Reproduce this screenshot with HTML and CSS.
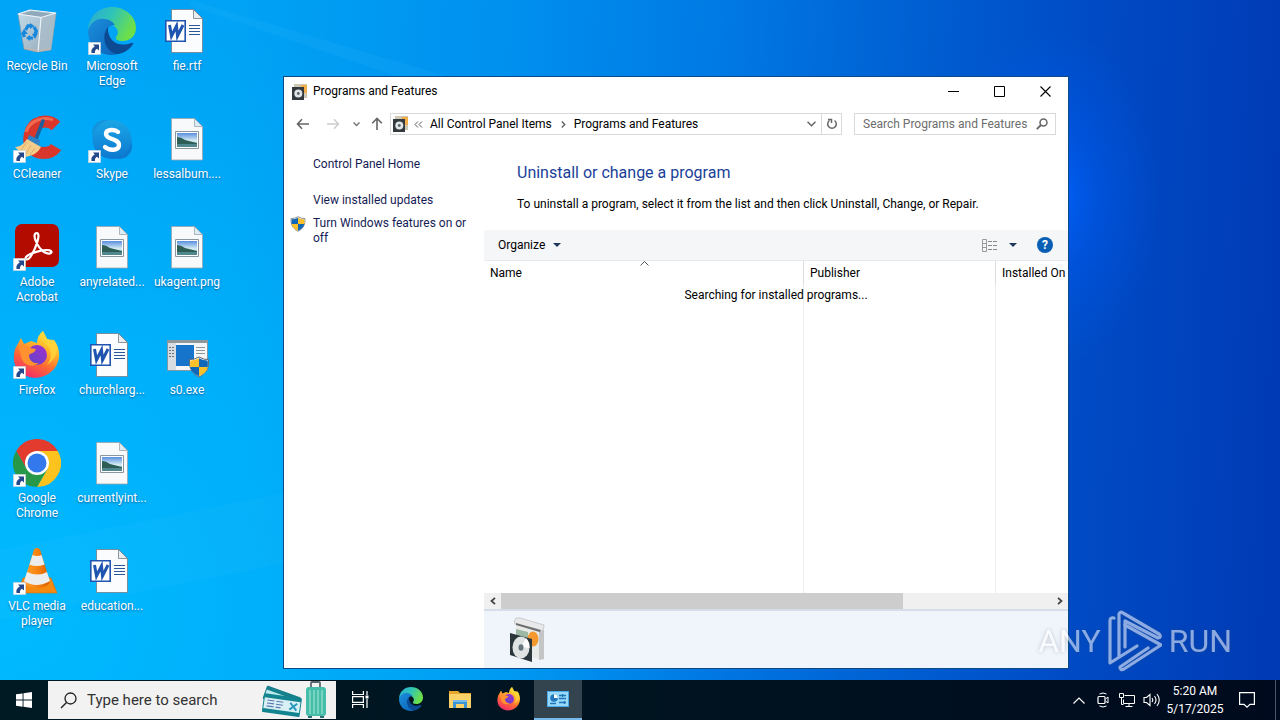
FILE: index.html
```html
<!DOCTYPE html>
<html lang="en">
<head>
<meta charset="utf-8">
<title>Desktop</title>
<link rel="stylesheet" href="styles.css">
</head>
<body>
<svg class="defs" aria-hidden="true">
  <defs>
    <linearGradient id="edgeGreen" x1="0" y1="0" x2="1" y2="0.4"><stop offset="0" stop-color="#2aa8d8"/><stop offset=".5" stop-color="#2fc4b8"/><stop offset="1" stop-color="#6cdf4a"/></linearGradient>
    <linearGradient id="edgeBlue" x1="0" y1="0" x2="1" y2="1"><stop offset="0" stop-color="#1b8fdc"/><stop offset="1" stop-color="#0b62b8"/></linearGradient>
    <linearGradient id="foxBody" x1=".8" y1="0" x2=".3" y2="1"><stop offset="0" stop-color="#fff03f"/><stop offset=".35" stop-color="#ffb52a"/><stop offset=".65" stop-color="#ff6a33"/><stop offset="1" stop-color="#f02a6c"/></linearGradient>
    <linearGradient id="foxGlobe" x1="0" y1="1" x2="1" y2="0"><stop offset="0" stop-color="#5a45c8"/><stop offset="1" stop-color="#a42fd0"/></linearGradient>
    <linearGradient id="skyGrad" x1="0" y1="0" x2="0" y2="1"><stop offset="0" stop-color="#1aa6e6"/><stop offset="1" stop-color="#0c78d0"/></linearGradient>
    <linearGradient id="photo" x1="0" y1="0" x2="0" y2="1"><stop offset="0" stop-color="#5a8fe0"/><stop offset=".55" stop-color="#d5ecf2"/><stop offset="1" stop-color="#8cc0d8"/></linearGradient>
    <linearGradient id="cone" x1="0" y1="0" x2="1" y2="0"><stop offset="0" stop-color="#ffa030"/><stop offset=".5" stop-color="#f88410"/><stop offset="1" stop-color="#d85f00"/></linearGradient>
    <linearGradient id="binGrad" x1="0" y1="0" x2="1" y2="1"><stop offset="0" stop-color="#c3dbea"/><stop offset="1" stop-color="#93a7b5"/></linearGradient>
    <symbol id="shortcut" viewBox="0 0 13 13"><path fill="#fff" stroke="#b9c6d3" stroke-width=".6" d="M.3.3h12.400v12.400H.3z"/><path fill="#25488c" d="M5 2.500h6v6L9 6.700Q6.500 8 7 11H3.500Q2.500 6.500 6.800 4.400z"/></symbol>
    <symbol id="shield" viewBox="0 0 22 22"><path fill="#fff" stroke="#5b6670" stroke-width="1" d="M11 1Q6 4 1.500 3.500C1 11 3 17 11 21c8-4 10-10 9.500-17.500Q16 4 11 1z"/><path fill="#fcc12a" d="M11 2.300Q15 4.500 19.700 4.500q.4 3.500 0 6.500H11zM2.300 11H11v9.200C5.300 18 3.100 14.700 2.300 11z"/><path fill="#1268b8" d="M11 2.300V11H2.300q-.4-3 0-6.500Q7 4.500 11 2.300zM11 11h8.700c-.8 3.700-3 7-8.700 9.200z"/></symbol>
    <symbol id="shieldAlt" viewBox="0 0 22 22"><path fill="#fff" stroke="#5b6670" stroke-width="1" d="M11 1Q6 4 1.500 3.500C1 11 3 17 11 21c8-4 10-10 9.500-17.500Q16 4 11 1z"/><path fill="#1268b8" d="M11 2.300Q15 4.500 19.700 4.500q.4 3.500 0 6.500H11zM2.300 11H11v9.200C5.300 18 3.100 14.700 2.300 11z"/><path fill="#fcc12a" d="M11 2.300V11H2.300q-.4-3 0-6.500Q7 4.500 11 2.300zM11 11h8.700c-.8 3.700-3 7-8.700 9.200z"/></symbol>
    <symbol id="recycle" viewBox="0 0 48 48"><path fill="url(#binGrad)" stroke="#8298a6" stroke-width=".7" d="M5 7 17 3l26 3-5 37-14 2-13-3z"/><path fill="#8fa9ba" d="m7 7 11-3 23 3-12 3z"/><path fill="#a9bcc8" opacity=".8" d="M28 10.500 43 6l-5 37-14 2z"/><path fill="none" stroke="#edf4f8" stroke-width="1.200" d="M5 7 28 10.500 43 6 17 3zM28 10.500 25 45"/><path fill="#c9b8a8" opacity=".6" d="m11 40 14 3 13-2-1 2-13 2-13-3z"/><path fill="none" stroke="#1687dd" stroke-width="3.200" d="m12.500 23 2.500-4.200h3M21 20l2.300 4-1.300 3M20 31h-4.500M11.500 30l-1.500-4"/><path fill="#1687dd" d="m17 16 4.500 3-4.500 3zM19 27l6-1-3 6zM8 27l3-5 4 5zM17 28v6l-4-3z"/></symbol>
    <symbol id="edge" viewBox="0 0 48 48"><path fill="url(#edgeGreen)" d="M0 23C1 9 11 0 24 0c14 0 24 10 24 21 0 8-6 13-13 13-6 0-8-2-7-4 3-3 2-7 0-9-6-7-20-8-28 2z"/><path fill="url(#edgeBlue)" d="M0 24c2-8 9-13 16-12 5 0 9 3 11 6-5-1-10 5-10 12 0 8 7 16 15 16-3 1-5 2-8 2C10 48 0 38 0 24z"/><path fill="#0c4a94" d="M20 20c-7 8-4 24 9 27 7 0 14-6 16-10 1-2-1-1-2-1-12 5-24-2-23-16z"/></symbol>
    <symbol id="worddoc" viewBox="0 0 48 48"><path fill="#fbfcfd" stroke="#717e88" stroke-width=".8" d="M8.500 2.500h22l9 9v34h-31z"/><path fill="#e9edf0" stroke="#717e88" stroke-width=".8" d="M30.500 2.500v9h9z"/><path stroke="#2b579a" stroke-width="1" d="M26 18.500h11M26 21.500h11M26 24.500h11M26 27.500h11"/><path fill="#fff" stroke="#1f55b0" stroke-width="1.600" d="M2.800 13.800h19.400v20.400H2.800z"/><path fill="none" stroke="#1f55b0" stroke-width="3" d="m6.500 18 2 11 5-10 1 10 5.500-11"/></symbol>
    <symbol id="imgdoc" viewBox="0 0 48 48"><path fill="#f8f9fa" stroke="#9aa5ad" stroke-width=".8" d="M8.500 3.500h23l8 8v33.500h-31z"/><path fill="#dcecf4" stroke="#9aa5ad" stroke-width=".8" d="M31.500 3.500v8h8z"/><path fill="#fff" stroke="#7d8a94" stroke-width=".9" d="M12.500 16.500h23v17h-23z"/><path fill="url(#photo)" d="M14 18h20v14H14z"/><path fill="#2e5d56" d="M14 22q4 0 8 3l12 3v1l-20 1z"/><path fill="#51878f" d="M14 29h20v3H14z"/></symbol>
    <symbol id="ccleaner" viewBox="0 0 48 48"><path fill="none" stroke="#d9372c" stroke-width="12" d="M43 11C35 3 20 6 17 19c-3 11 4 19 13 19 6 0 10-1 13-6"/><path fill="none" stroke="#f06a50" stroke-width="3" d="M40 5C31 1 17 5 13 17"/><path stroke="#1f5f9c" stroke-width="3.500" stroke-linecap="round" d="m30 6-7 18"/><path fill="#2e82c8" d="m16 20 11 5-1 7-12-6z"/><path fill="#f5cd8a" d="m14 24 14 8c-3 6-9 9-16 10L2 32c6 0 9-4 12-8z"/><path stroke="#dcae6a" fill="none" d="m14 27-6 8m10-5-5 9m9-6-5 7"/></symbol>
    <symbol id="skype" viewBox="0 0 48 48"><circle cx="17" cy="18" r="13" fill="#1493dc"/><circle cx="31" cy="31" r="13" fill="#0d7ad0"/><circle cx="24" cy="24.500" r="19.500" fill="url(#skyGrad)"/><path fill="none" stroke="#fff" stroke-width="4.400" stroke-linecap="round" d="M30 17c-3-3-12-3-12 2 0 6 13 4 13 11 0 6-10 6-14 2"/></symbol>
    <symbol id="acrobat" viewBox="0 0 48 48"><rect x="2" y="1" width="44" height="43" rx="7" fill="#b30b00"/><path fill="none" stroke="#fff" stroke-width="2.200" stroke-linejoin="round" d="M24 10c-6 0 0 14 7 19 5 3 9 1 7-1-4-3-22 2-25 6-2 3 2 4 5-1 5-8 10-22 6-23z"/></symbol>
    <symbol id="firefox" viewBox="0 0 48 48"><path fill="url(#foxBody)" d="M2 18 8 7l3 6 7-3 6 2c0-5 2-9 6-12l4 8 5 2 2-1c8 10 6 24-2 31-9 9-25 9-33 0C0 34 0 26 2 18z"/><circle cx="24" cy="24" r="10" fill="url(#foxGlobe)"/><path fill="#ff9130" d="M5 14c5-1 9 0 12 3l6 1c-1 4-5 4-7 6 0 6 5 9 10 8-8 6-17 1-18-7z"/><path fill="#ffd43b" opacity=".8" d="M30 0c-3 5 0 10 4 14 5 5 5 14 0 20 10-6 13-17 7-25l-7-1z"/></symbol>
    <symbol id="exe" viewBox="0 0 48 48"><path fill="#f6f6f6" stroke="#82898e" stroke-width=".8" d="M4.500 9.500h40v30h-40z"/><path fill="#8f979c" d="M4 9h41v3H4z"/><path fill="#d8dde1" d="M5 12h8v27H5z"/><path fill="#1674cb" d="M13 14h18v21H13z"/><path stroke="#68747e" stroke-dasharray="2 1" d="M6 16.500h6M6 19.500h6M6 22.500h6M6 25.500h6"/><path stroke="#8b959d" d="M33 16.500h9M33 19.500h9M33 22.500h9"/><use href="#shieldAlt" x="25" y="25" width="22" height="22"/></symbol>
    <symbol id="chrome" viewBox="0 0 48 48"><path fill="#e33b2e" d="M3.200 12A24 24 0 0 1 44.800 12H24L13.600 30z"/><path fill="#fcc31e" d="M44.800 12A24 24 0 0 1 24 48l10.400-18L24 12z"/><path fill="#279847" d="M3.200 12A24 24 0 0 0 24 48l10.400-18H13.600z"/><circle cx="24" cy="24" r="12" fill="#fff"/><circle cx="24" cy="24" r="9.500" fill="#3478ee"/></symbol>
    <symbol id="vlc" viewBox="0 0 48 48"><path fill="#f58a12" stroke="#d86b00" stroke-width=".6" d="M10 31h28l6 15H5z"/><path fill="url(#cone)" d="M24 1q3 0 3.500 3L37 35q-3 6-13 6t-13-6l9.500-31Q21 1 24 1z"/><path fill="#ededed" d="m19.500 8-3 9.500q7 3 15 0L28.500 8q-4 2-9 0zM14 25l-3 9q12 8 26 0l-3-9q-9 5-20 0z"/></symbol>
    <symbol id="pnf" viewBox="0 0 16 16"><path fill="#cfc8b4" d="M2 0h13v14H2z"/><path fill="#f2ae48" d="M9 1h6v8H9z"/><path fill="#33393c" d="M0 3h12v13H0z"/><circle cx="6.300" cy="9.500" r="4" fill="#dfe5e6"/><circle cx="6.300" cy="9.500" r="1.400" fill="#566"/></symbol>
    <symbol id="folder" viewBox="0 0 22 22"><path fill="#e5a72c" d="M0 3h9l2 2h11v4H0z"/><path fill="#fbd267" d="M0 6h22v14H0z"/><path fill="#3d94d4" d="M4 12h14v8h-3v-4H7v4H4z"/><path fill="#75bce9" d="M4 12h14v2H4z"/></symbol>
    <symbol id="cpl" viewBox="0 0 22 16"><path fill="#48a9e8" d="M0 0h22v16H0z"/><path fill="#97d9fa" d="M1 1h20v14H1z"/><circle cx="7" cy="7" r="3.800" fill="#2278ba"/><path fill="#fff" d="M7 3.200A3.800 3.800 0 0 1 10.800 7H7z"/><path stroke="#1f75b8" stroke-width="1.300" d="M12 4.500h7M12 7.500h7M12 11.500h7M3 12.500h6M15.500 3v3M17.500 10v3"/></symbol>
  </defs>
</svg>

<main class="desktop">
  <svg class="rays" viewBox="0 0 1280 680" preserveAspectRatio="none" aria-hidden="true"><path fill="#34b6ff" opacity=".14" d="M190 0 620 128 1060 300 190 6z"/><path fill="#36c0ff" opacity=".1" d="M0 550 300 490 300 560 0 620z"/></svg>
  <nav class="icons" aria-label="Desktop icons">
    <a href="#"><svg class="big"><use href="#recycle"/></svg><span>Recycle Bin</span></a>
    <a href="#"><svg class="big"><use href="#ccleaner"/><use href="#shortcut" y="35" width="13" height="13"/></svg><span>CCleaner</span></a>
    <a href="#"><svg class="big"><use href="#acrobat"/><use href="#shortcut" y="35" width="13" height="13"/></svg><span>Adobe Acrobat</span></a>
    <a href="#"><svg class="big"><use href="#firefox"/><use href="#shortcut" y="35" width="13" height="13"/></svg><span>Firefox</span></a>
    <a href="#"><svg class="big"><use href="#chrome"/><use href="#shortcut" y="35" width="13" height="13"/></svg><span>Google Chrome</span></a>
    <a href="#"><svg class="big"><use href="#vlc"/><use href="#shortcut" y="35" width="13" height="13"/></svg><span>VLC media player</span></a>
    <a href="#"><svg class="big"><use href="#edge"/><use href="#shortcut" y="35" width="13" height="13"/></svg><span>Microsoft Edge</span></a>
    <a href="#"><svg class="big"><use href="#skype"/><use href="#shortcut" y="35" width="13" height="13"/></svg><span>Skype</span></a>
    <a href="#"><svg class="big"><use href="#imgdoc"/></svg><span>anyrelated...</span></a>
    <a href="#"><svg class="big"><use href="#worddoc"/></svg><span>churchlarg...</span></a>
    <a href="#"><svg class="big"><use href="#imgdoc"/></svg><span>currentlyint...</span></a>
    <a href="#"><svg class="big"><use href="#worddoc"/></svg><span>education...</span></a>
    <a href="#"><svg class="big"><use href="#worddoc"/></svg><span>fie.rtf</span></a>
    <a href="#"><svg class="big"><use href="#imgdoc"/></svg><span>lessalbum....</span></a>
    <a href="#"><svg class="big"><use href="#imgdoc"/></svg><span>ukagent.png</span></a>
    <a href="#"><svg class="big"><use href="#exe"/></svg><span>s0.exe</span></a>
  </nav>

  <section class="window" aria-label="Programs and Features">
    <header class="titlebar">
      <svg class="small"><use href="#pnf"/></svg>
      <span class="caption">Programs and Features</span>
      <button class="winbtn" aria-label="Minimize"><svg width="11" height="11"><path stroke="#000" d="M0 5.500h11"/></svg></button>
      <button class="winbtn" aria-label="Maximize"><svg width="11" height="11"><path fill="none" stroke="#000" d="M.5.500h10v10H.5z"/></svg></button>
      <button class="winbtn" aria-label="Close"><svg width="11" height="11"><path stroke="#000" stroke-width="1.100" d="m.5.500 10 10m0-10-10 10"/></svg></button>
    </header>

    <div class="navbar">
      <div class="history">
        <button aria-label="Back"><svg width="14" height="12"><path fill="none" stroke="#666" stroke-width="1.600" d="M13 6H1.500M6 1.200 1.500 6 6 10.800"/></svg></button>
        <button aria-label="Forward"><svg width="14" height="12"><path fill="none" stroke="#ccc" stroke-width="1.400" d="M1 6h11.500M8 1.200 12.500 6 8 10.800"/></svg></button>
        <button class="tiny" aria-label="Recent locations"><svg width="7" height="5"><path fill="none" stroke="#777" stroke-width="1.500" d="m.5.500 3 3 3-3"/></svg></button>
        <button aria-label="Up"><svg width="12" height="14"><path fill="none" stroke="#666" stroke-width="1.600" d="M6 13V1.500M1.200 6.300 6 1.500l4.800 4.800"/></svg></button>
      </div>
      <div class="address">
        <svg class="small"><use href="#pnf"/></svg>
        <svg class="dbl" width="9" height="7"><path fill="none" stroke="#555" d="m4 .500-3 3 3 3m4-6-3 3 3 3"/></svg>
        <a href="#">All Control Panel Items</a>
        <svg class="sep" width="5" height="7"><path fill="none" stroke="#555" stroke-width="1.200" d="m.8.500 3 3-3 3"/></svg>
        <a href="#">Programs and Features</a>
        <button class="drop" aria-label="Previous locations"><svg width="9" height="6"><path fill="none" stroke="#666" stroke-width="1.500" d="m.5.800 4 4 4-4"/></svg></button>
        <button class="refresh" aria-label="Refresh"><svg width="12" height="12"><path fill="none" stroke="#666" stroke-width="1.500" d="M8.500 2.500a4.300 4.300 0 1 1-5 0M2 1.500h3.500V5"/></svg></button>
      </div>
      <label class="search">
        <input type="search" placeholder="Search Programs and Features" aria-label="Search Programs and Features">
        <svg width="12" height="12"><circle cx="7.500" cy="4.500" r="3.500" fill="none" stroke="#666" stroke-width="1.500"/><path stroke="#666" stroke-width="1.800" d="M5 7 .8 11.200"/></svg>
      </label>
    </div>

    <div class="content">
      <aside class="tasks">
        <a class="home" href="#">Control Panel Home</a>
        <a href="#">View installed updates</a>
        <a class="shielded" href="#"><svg class="small"><use href="#shield"/></svg><span>Turn Windows features on or off</span></a>
      </aside>
      <div class="pane">
        <div class="intro">
          <h1>Uninstall or change a program</h1>
          <p>To uninstall a program, select it from the list and then click Uninstall, Change, or Repair.</p>
        </div>
        <div class="toolbar">
          <button class="organize">Organize <svg width="8" height="4"><path fill="#1e395b" d="M0 0h8L4 4z"/></svg></button>
          <button aria-label="Change view"><svg width="16" height="13"><path fill="none" stroke="#999" d="M.5.500h4v12h-4zM.5 4.500h4M.5 8.500h4"/><path stroke="#888" stroke-dasharray="4 1" d="M6 2.500h10M6 6.500h10M6 10.500h10"/></svg></button>
          <button class="more" aria-label="More options"><svg width="8" height="4"><path fill="#1e395b" d="M0 0h8L4 4z"/></svg></button>
          <button class="help" aria-label="Help">?</button>
        </div>
        <div class="list">
          <table>
            <thead><tr><th class="c-name" scope="col">Name</th><th class="c-pub" scope="col">Publisher</th><th scope="col">Installed On</th></tr></thead>
            <tbody><tr><td></td><td></td><td></td></tr></tbody>
          </table>
          <svg class="sort" width="9" height="5"><path fill="none" stroke="#555" d="m.5 4.500 4-4 4 4"/></svg>
          <p class="status">Searching for installed programs...</p>
        </div>
        <div class="hscroll">
          <button aria-label="Scroll left"><svg width="6" height="8"><path fill="none" stroke="#444" stroke-width="1.800" d="M5 .800 1.500 4 5 7.200"/></svg></button>
          <div class="track"><div class="thumb"></div></div>
          <button aria-label="Scroll right"><svg width="6" height="8"><path fill="none" stroke="#444" stroke-width="1.800" d="M1 .800 4.500 4 1 7.200"/></svg></button>
        </div>
        <footer class="details">
          <svg width="40" height="46" viewBox="0 0 40 46"><path fill="#e8eae8" d="m8 6 27 8v29l-5-1-22-7z"/><path fill="#9fb8a5" d="m8 12 12 3v10H8z"/><ellipse cx="25" cy="22" rx="5.500" ry="7.500" fill="#f5982e"/><path fill="#c3c5c6" d="m31 12 5 1v29l-5 1z"/><path fill="#e9e9ea" stroke="#b2b4b5" stroke-width=".6" d="M8 1q-3 3-1 6l25 8q4-1 4-7L12 1z"/><path fill="#6d6f71" d="m8 6 25 7-1 2-24-7z"/><path fill="#2a363b" d="m2 16 22 6v23L2 38z"/><ellipse cx="13" cy="30.500" rx="8.500" ry="11" fill="#dfe3e4"/><path fill="#fff" d="m13 30 5-9q4 4 3.500 10z"/><ellipse cx="13" cy="30.500" rx="2.500" ry="3.200" fill="#66767d"/></svg>
        </footer>
      </div>
    </div>
  </section>

  <div class="watermark">
    <span>ANY</span>
    <svg width="54" height="62" viewBox="0 0 54 62"><g fill="none" stroke="#fff" stroke-width="3.200" stroke-linejoin="round" stroke-linecap="round"><path d="M6 8q-4-1-4 3v42l27-17"/><path d="M11 46V4q1-3 4-1l36 21q3 3-1 4L17 11v26"/><path d="m17 15 36 20-37 24q-4 2-4-2l28-19"/></g></svg>
    <span>RUN</span>
  </div>
</main>

<footer class="taskbar">
  <button class="start" aria-label="Start"><svg width="16" height="16"><path fill="#fff" d="m0 2.300 6.600-.9v6.200H0zM7.500 1.200 16 0v7.600H7.500zM0 8.500h6.600v6.200L0 13.800zM7.500 8.500H16V16l-8.500-1.200z"/></svg></button>
  <label class="tsearch">
    <svg width="17" height="17"><circle cx="10.500" cy="6.500" r="5.500" fill="none" stroke="#222" stroke-width="1.300"/><path stroke="#222" stroke-width="1.400" d="M6.500 10.500 1 16"/></svg>
    <input type="text" placeholder="Type here to search" aria-label="Type here to search">
    <svg class="travel" width="68" height="38" viewBox="0 0 68 38"><g transform="rotate(20 4 5)"><rect x="5" y="4" width="36" height="14" rx="1" fill="#177f8c"/><path fill="#bdecf0" d="M6 8h34v8H6z"/></g><g transform="rotate(8 2 15)"><rect x="2" y="12" width="38" height="19" rx="1" fill="#12848f"/><path fill="#d8eff6" d="M3 16h36v11H3z"/><path stroke="#5a79ae" stroke-width="1.200" stroke-dasharray="7 2" d="M6 18.500h18M6 21.500h18M6 24.500h14"/><path stroke="#289bbd" stroke-width="2" d="m29 18 7 7m0-7-7 7"/></g><path fill="none" stroke="#5a6770" stroke-width="1.800" d="M49 7V2q0-1 1-1h7q1 0 1 1v5"/><rect x="44" y="6" width="20" height="29" rx="3" fill="#45bda8"/><path stroke="#86dbc9" stroke-width="1.500" d="M48 9v24M52 9v24M56 9v24M60 9v24"/><path fill="#356e73" d="M46 35h4v2h-4zM58 35h4v2h-4z"/></svg>
  </label>
  <nav class="apps" aria-label="Taskbar apps">
    <button class="taskview" aria-label="Task View"><svg width="17" height="17"><path fill="none" stroke="#fff" stroke-width="1.200" d="M.6 0v3.500h10.800V0M.6 17v-3.500h10.800V17M.6 5.600h10.800v5.800H.6zM15 0v4M15 8v9"/><path fill="#fff" d="M13.500 4.500h3v3h-3z"/></svg></button>
    <button aria-label="Microsoft Edge"><svg width="24" height="24"><use href="#edge"/></svg></button>
    <button aria-label="File Explorer"><svg width="22" height="22"><use href="#folder"/></svg></button>
    <button aria-label="Firefox"><svg width="24" height="24"><use href="#firefox"/></svg></button>
    <button class="active" aria-label="Programs and Features"><svg width="22" height="16"><use href="#cpl"/></svg></button>
  </nav>
  <div class="tray">
    <button aria-label="Show hidden icons"><svg width="12" height="7"><path fill="none" stroke="#fff" stroke-width="1.200" d="m.5 6.500 5.500-5.500 5.500 5.500"/></svg></button>
    <button aria-label="Meet Now"><svg width="12" height="16"><rect x="1" y="4.500" width="7" height="7" rx="1" fill="none" stroke="#fff" stroke-width="1.200"/><path fill="none" stroke="#fff" d="m8.500 7 2.500-2v6L8.500 9M2.500 2Q6 0 9.500 2m-7 12q3.500 2 7 0"/></svg></button>
    <button aria-label="Network"><svg width="16" height="14"><path fill="none" stroke="#fff" d="M5.500 2.500h10v8h-11v-4M10 10.500v3M6.500 13.500h7M.5.500h4v4h-4zM2.500 5v6.500h2"/></svg></button>
    <button aria-label="Volume"><svg width="17" height="14"><path fill="none" stroke="#fff" stroke-width="1.100" d="M1 4.500h2.500L7 1.500v11L3.500 9.500H1zM9 5q1.500 2 0 4M11.500 3q3 4 0 8M14 1q4.500 6 0 12"/></svg></button>
    <button class="clock"><span>5:20 AM</span><span>5/17/2025</span></button>
    <button class="notify" aria-label="Notifications"><svg width="16" height="16"><path fill="none" stroke="#fff" stroke-width="1.200" d="M.6.600h14.800v11.800h-4.400L8 15.200 5 12.400H.6z"/></svg></button>
    <button class="peek" aria-label="Show desktop"></button>
  </div>
</footer>
</body>
</html>
```
FILE: styles.css
```css
* { box-sizing: border-box; }
body {
  margin: 0;
  height: 100vh;
  display: flex;
  flex-direction: column;
  overflow: hidden;
  font: 12px/15px Roboto, "Open Sans", sans-serif;
  color: #000;
}
button {
  border: 0;
  padding: 0;
  background: none;
  font: inherit;
  color: inherit;
  display: flex;
  align-items: center;
  justify-content: center;
}
a { color: inherit; text-decoration: none; }
svg { display: block; flex: none; }
input { border: 0; outline: 0; padding: 0; background: none; font: inherit; min-width: 0; flex: 1; }
input::-webkit-search-cancel-button { display: none; }
h1, p { margin: 0; font-weight: 400; }
.defs { position: absolute; width: 0; height: 0; }

.desktop {
  position: relative;
  flex: 1;
  min-height: 0;
  background:
    radial-gradient(ellipse 110px 170px at 82% 29%, rgba(0, 98, 255, .9), rgba(0, 92, 244, .4) 45%, rgba(0, 80, 220, 0)),
    radial-gradient(ellipse 700px 620px at 0 90%, rgba(0, 188, 255, .9), rgba(0, 184, 255, 0)),
    linear-gradient(92deg, #00a4f8 0%, #00a3f5 18%, #0090ee 39%, #007ae4 55%, #0060d2 70%, #004cc6 83%, #003ab4 100%);
}
.rays { position: absolute; inset: 0; width: 100%; height: 100%; }
.icons {
  position: relative;
  display: grid;
  grid-auto-flow: column;
  grid-template-rows: repeat(6, 108px);
  grid-auto-columns: 75px;
  width: max-content;
  padding-top: 7px;
}
.icons a {
  display: flex;
  flex-direction: column;
  align-items: center;
  gap: 4px;
  padding-right: 1px;
  color: #fff;
  text-align: center;
  text-shadow: 0 1px 2px rgba(0, 40, 90, .6);
}
.icons span { max-width: 73px; }
.big { width: 48px; height: 48px; }
.small { width: 16px; height: 16px; }

.window {
  position: absolute;
  inset: 76px 211px 11px 283px;
  display: flex;
  flex-direction: column;
  background: #fff;
  border: 1px solid #0b4a86;
}
.titlebar { display: flex; align-items: center; height: 29px; padding-left: 8px; gap: 5px; }
.caption { flex: 1; }
.titlebar .winbtn { width: 46px; height: 29px; margin-left: -5px; }
.navbar { display: flex; align-items: center; height: 36px; padding: 0 12px; }
.history { display: flex; width: 94px; height: 22px; align-items: center; }
.history button { width: 14px; margin-right: 16px; }
.history button:nth-child(2) { margin-right: 12px; }
.history .tiny { width: 8px; margin-right: 11px; }
.history button:last-child { width: 12px; margin-right: 0; }
.address { flex: 1; display: flex; align-items: center; height: 22px; border: 1px solid #d9d9d9; padding-left: 2px; }
.address .dbl { margin: 0 7px 0 5px; }
.address .sep { margin: 0 8px 0 9px; }
.address .drop { width: 20px; height: 20px; margin-left: auto; }
.address .refresh { width: 20px; height: 20px; border-left: 1px solid #d9d9d9; }
.search { display: flex; align-items: center; width: 202px; height: 22px; margin-left: 12px; padding: 0 7px 0 8px; border: 1px solid #d9d9d9; }
.search input::placeholder { color: #6d6d6d; opacity: 1; }

.content { flex: 1; display: flex; min-height: 0; }
.tasks { width: 200px; flex: none; display: flex; flex-direction: column; gap: 8px; padding: 15px 14px 0 29px; color: #151c55; }
.tasks .home { margin-bottom: 13px; }
.shielded { display: flex; margin-left: -23px; gap: 7px; }
.pane { flex: 1; min-width: 0; display: flex; flex-direction: column; }
.intro { padding: 20px 33px 18px; }
.intro h1 { font-size: 16px; line-height: 22px; color: #1a3f98; margin-bottom: 13px; }
.intro p { white-space: nowrap; }
.toolbar { display: flex; align-items: center; height: 31px; padding: 0 15px 0 14px; background: #f5f6f8; border-bottom: 1px solid #e6e9ee; }
.organize { gap: 8px; margin-right: auto; }
.toolbar .more { margin: 0 20px 0 11px; }
.toolbar .help { width: 16px; height: 16px; border-radius: 50%; background: #0a5fb4; color: #fff; font-weight: 700; }
.list { position: relative; flex: 1; min-height: 0; overflow: hidden; }
.list table { width: 137%; height: 100%; table-layout: fixed; border-collapse: separate; border-spacing: 0; }
.list th { height: 24px; padding: 0 6px; text-align: left; font-weight: 400; border-right: 1px solid #dedede; }
.list td { border-right: 1px solid #ededed; }
.c-name { width: 320px; }
.c-pub { width: 192px; }
.sort { position: absolute; left: 156px; top: 0; }
.status { position: absolute; left: 0; right: 0; top: 27px; text-align: center; }
.hscroll { display: flex; height: 16px; background: #f0f0f0; }
.hscroll button { width: 17px; height: 16px; }
.track { flex: 1; }
.thumb { width: 73%; height: 100%; background: #cdcdcd; }
.details { height: 59px; border-top: 2px solid #d5dfeb; background: #f0f4fb; padding: 6px 24px; }

.watermark {
  position: absolute;
  right: 48px;
  bottom: 8px;
  display: flex;
  align-items: center;
  gap: 7px;
  color: #fff;
  font: 400 32px/62px Roboto, "Liberation Sans", sans-serif;
  opacity: .55;
  filter: drop-shadow(0 0 2px rgba(60, 70, 90, .5));
}

.taskbar { display: flex; height: 40px; flex: none; color: #fff; background: linear-gradient(90deg, #001a24, #001420 50%, #000a1e); }
.start { width: 48px; }
.tsearch { display: flex; align-items: center; width: 288px; padding: 0 6px 0 12px; gap: 10px; margin: 1px 0; background: #f2f2f2; }
.tsearch input { font-size: 15px; line-height: 20px; }
.tsearch input::placeholder { color: #333; opacity: 1; }
.apps { display: flex; }
.apps button { width: 48px; margin-right: 1px; border-bottom: 2px solid transparent; }
.apps .taskview { margin-right: 3px; }
.apps .active { background: #33444e; border-bottom-color: #76b9ed; }
.tray { display: flex; margin-left: auto; }
.tray button { width: 24px; }
.tray .clock { flex-direction: column; width: 64px; line-height: 18px; }
.tray .notify { width: 40px; margin-right: 8px; }
.tray .peek { width: 5px; border-left: 1px solid #4a5568; }
```
